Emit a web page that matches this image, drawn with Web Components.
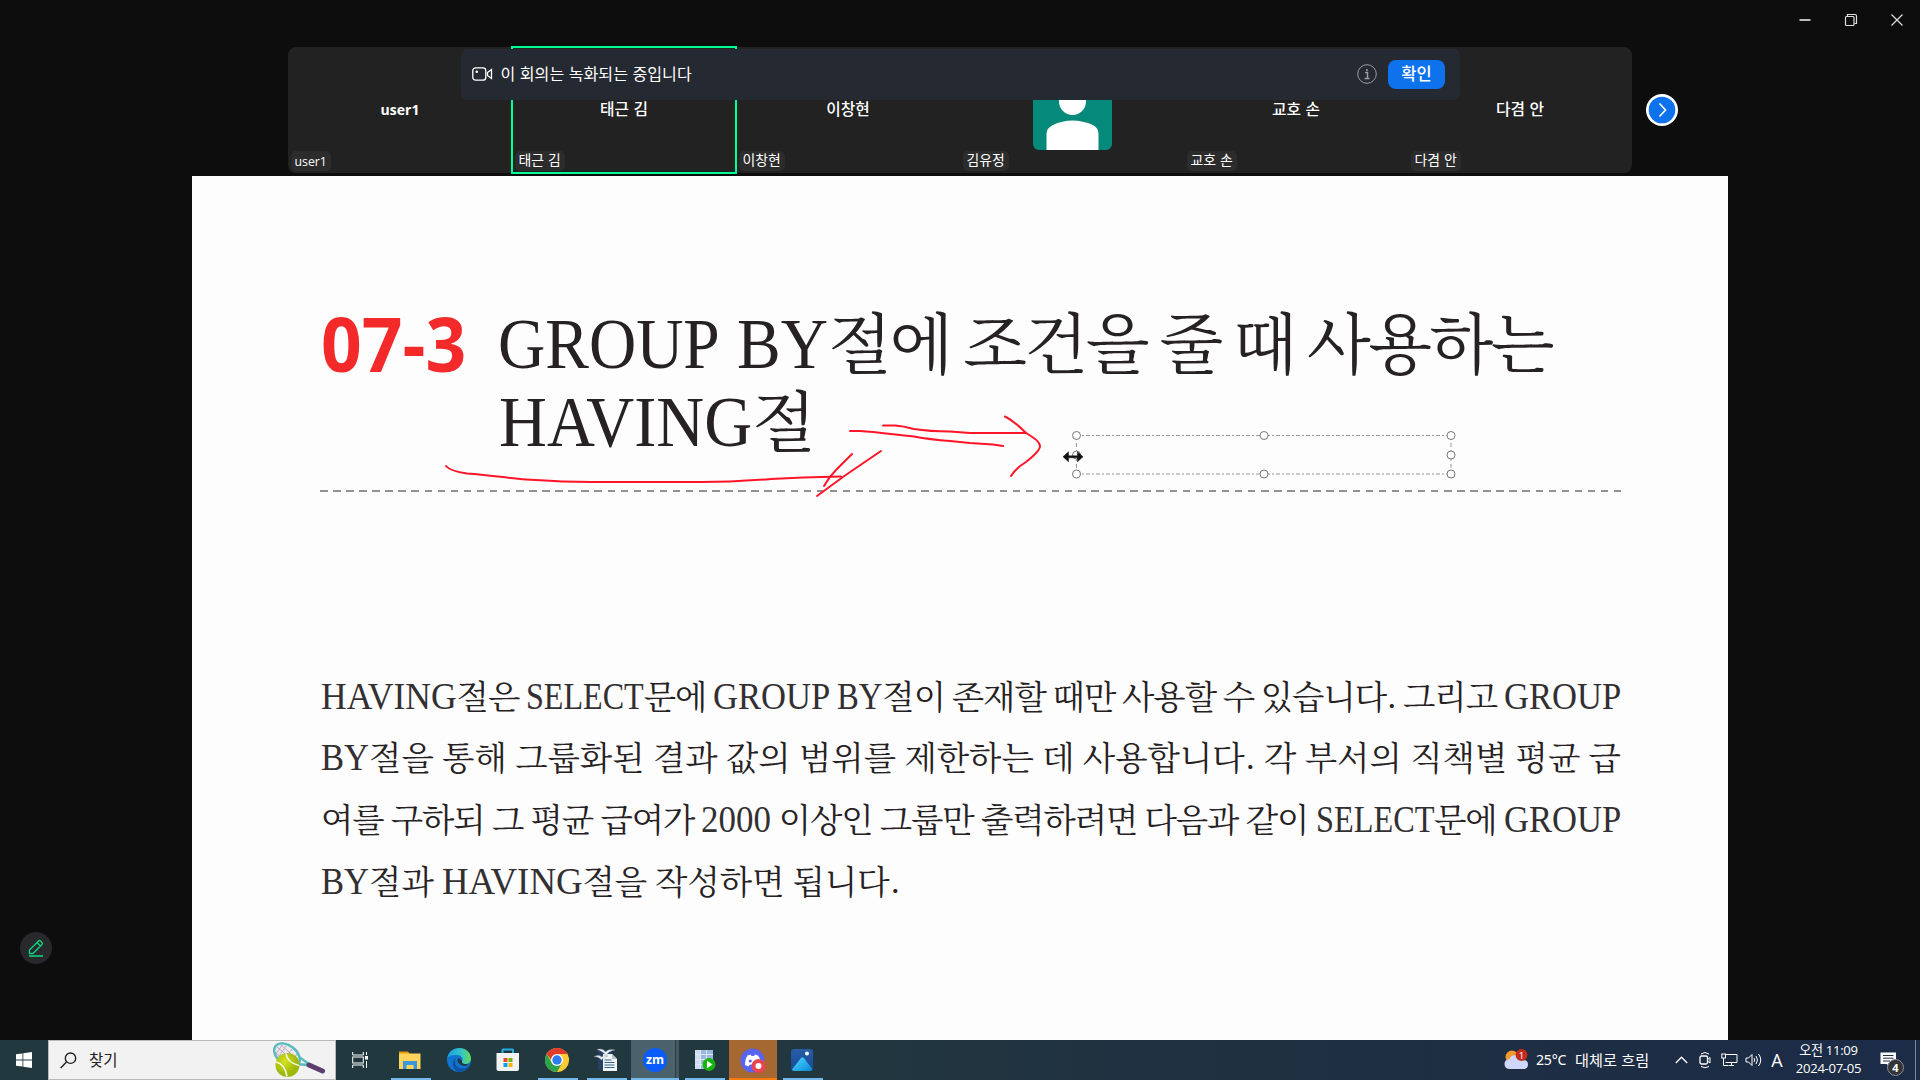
<!DOCTYPE html>
<html lang="ko">
<head>
<meta charset="utf-8">
<title>Meeting</title>
<style>
html,body{margin:0;height:100%;background:#0d0d0d;overflow:hidden}
body{font-family:"Noto Sans","Noto Sans CJK KR",sans-serif}
</style>
</head>
<body>
<meeting-app></meeting-app>
<script>
function define(name, html, init){
  const t=document.createElement('template');
  t.innerHTML=html;
  customElements.define(name, class extends HTMLElement{
    constructor(){super();this.attachShadow({mode:'open'}).appendChild(t.content.cloneNode(true));}
    connectedCallback(){ if(init && !this.done){this.done=true;init.call(this,this.shadowRoot);} }
  });
}

/* Text whose glyphs are condensed horizontally by the "k" attribute. */
define('narrow-text',`<style>
:host{display:inline-block;white-space:pre;vertical-align:baseline}
span{display:inline-block;transform-origin:0 50%}
</style><span></span>`,function(r){
  const s=r.querySelector('span'),k=+this.getAttribute('k');
  s.textContent=this.getAttribute('text');
  const w=s.getBoundingClientRect().width;
  s.style.transform=`scaleX(${k})`;
  this.style.width=w*k+'px';
});

/* One typeset line. "k" lists the condensing factor of each Latin run in order. */
define('book-line',`<style>
:host{display:flex;align-items:baseline;white-space:nowrap;color:#262223;height:var(--lh);line-height:var(--lh)}
:host([justify]){justify-content:space-between}
.w{display:flex;align-items:baseline}
.w.after{margin-left:var(--lgap,0)}
.l{font-family:"Liberation Serif",serif;font-size:var(--latin);color:var(--latin-color,#262223)}
.h{font-family:"Noto Serif CJK KR","Noto Sans CJK KR Light","Noto Sans CJK KR",serif;font-weight:var(--hw,300);font-size:var(--hangul);letter-spacing:var(--track,0)}
</style>`,function(r){
  const ks=this.getAttribute('k').split(' ');
  let i=0,prevLatin=false;
  this.getAttribute('text').split(' ').forEach(word=>{
    const w=document.createElement('div');w.className='w';
    if(prevLatin)w.classList.add('after');
    r.appendChild(w);
    word.match(/[A-Z0-9]+|[^A-Z0-9]+/g).forEach(run=>{
      if(/[A-Z0-9]/.test(run)){
        const e=document.createElement('narrow-text');
        e.className='l';e.setAttribute('k',ks[Math.min(i++,ks.length-1)]);e.setAttribute('text',run);
        w.appendChild(e);
      }else{
        const e=document.createElement('span');e.className='h';e.textContent=run;w.appendChild(e);
      }
    });
    prevLatin=/[A-Z0-9]$/.test(word);
  });
});

define('window-controls',`<style>
:host{display:flex;justify-content:flex-end;height:47px;box-sizing:border-box;padding:0}
svg{width:46px;height:40px}
</style>
<svg viewBox="0 0 46 40"><path d="M17.500 20h11" stroke="#bbb" stroke-width="2"/></svg>
<svg viewBox="0 0 46 40" fill="none" stroke="#ddd" stroke-width="1.2"><rect x="17.5" y="16.5" width="8.5" height="9" rx="1"/><path d="M19.5 16v-1.5h7.500q1.500 0 1.500 1.500v7.500h-2"/></svg>
<svg viewBox="0 0 46 40"><path d="M17.500 14.500l11 11m0-11l-11 11" stroke="#ddd" stroke-width="1.200"/></svg>`);

define('participant-tile',`<style>
:host{display:flex;flex-direction:column;width:224px;height:126px;position:relative;box-sizing:border-box;color:#fff}
:host([active])::after{content:"";position:absolute;inset:-1px;border:2px solid #00ff94}
.name{flex:1;display:flex;justify-content:center;align-items:center;font:500 15.800px/20px "Noto Sans CJK KR",sans-serif;padding-bottom:2px}
.name.en{font:700 14px/20px "Open Sans",sans-serif;padding-bottom:0}
.name.pic{padding-bottom:0}
.tag{position:absolute;left:2.500px;bottom:2px;height:20px;border-radius:5px;background:#2c2c2c;padding:0 4px;font:400 13.900px/16px "Noto Sans CJK KR",sans-serif;white-space:pre}
.tag.en{font:400 12.300px/21px "Open Sans",sans-serif;}
</style><div class="name"><slot></slot></div><div class="tag"></div>`,function(r){
  const n=this.getAttribute('name'),tag=r.querySelector('.tag'),name=r.querySelector('.name');
  tag.textContent=n;
  if(/^[a-z]/.test(n)){tag.classList.add('en');name.classList.add('en');}
  if(this.hasAttribute('avatar'))name.classList.add('pic');
  else name.textContent=n;
});

define('user-avatar',`<style>:host{display:block;width:79px;height:80px;border-radius:6px;overflow:hidden;margin-left:1px}svg{display:block}</style>
<svg width="80" height="80" viewBox="0 0 80 80"><rect width="80" height="80" fill="#04897b"/><circle cx="39.500" cy="31.500" r="13.500" fill="#fff"/><path d="M13.500 80V64Q13.500 58 20 55Q29 50.500 39.500 50.500Q50 50.500 60 55Q65.500 58 65.500 64V80Z" fill="#fff"/></svg>`);

define('recording-notice',`<style>
:host{position:absolute;left:461px;top:49px;width:999px;height:51px;box-sizing:border-box;border-radius:6px;background:#252931;display:flex;align-items:center;padding:0 15px 0 11px;color:#fff}
.t{margin-left:7.500px;flex:1;font:400 16.100px/22px "Noto Sans CJK KR",sans-serif;padding-bottom:4px}
.b{width:57px;height:29px;border-radius:8px;background:#0e72ed;text-align:center;font:500 16.500px/26px "Noto Sans CJK KR",sans-serif;margin-left:11.500px}
svg{display:block;margin-top:-1px}
</style>
<svg width="21" height="16" viewBox="0 0 21 16" fill="none" stroke="#fff" stroke-width="1.300"><rect x=".8" y="1.800" width="13" height="12.400" rx="2.800"/><path d="M15.500 6.500l4-3v9l-4-3z"/><circle cx="4.800" cy="5.800" r="1.300" fill="#fff" stroke="none"/></svg>
<div class="t">이 회의는 녹화되는 중입니다</div>
<svg width="20" height="20" viewBox="0 0 20 20" fill="none" stroke="#9a9da1"><circle cx="10" cy="10" r="9.300"/><path d="M8 8.500h2.500V14M7.500 14.500h5M10 5v2" stroke-width="1.500"/></svg>
<div class="b">확인</div>`);

define('gallery-strip',`<style>
:host{display:flex;align-items:center;height:126px;padding-left:288px}
.s{display:flex;background:#222;border-radius:8px;height:126px;width:1344px}
svg{margin-left:13.500px}
</style><div class="s">
<participant-tile name="user1"></participant-tile>
<participant-tile name="태근 김" active></participant-tile>
<participant-tile name="이창현"></participant-tile>
<participant-tile name="김유정" avatar><user-avatar></user-avatar></participant-tile>
<participant-tile name="교호 손"></participant-tile>
<participant-tile name="다겸 안"></participant-tile>
</div>
<svg width="32" height="32" viewBox="0 0 32 32"><circle cx="16" cy="16" r="16" fill="#fff"/><circle cx="16" cy="16" r="13.300" fill="#0e72ed"/><path d="M13.500 9.500l6 6.500-6 6.500" fill="none" stroke="#fff" stroke-width="1.700"/></svg>`);

define('slide-ink',`<style>:host{position:absolute;left:0;top:0;width:1920px;height:1080px;pointer-events:none}svg{display:block}</style>
<svg width="1920" height="1080" viewBox="0 0 1920 1080" fill="none">
<g stroke="#ff1428" stroke-width="2" stroke-linecap="round" stroke-linejoin="round">
<path d="M446 466Q450 471 467 473.500C490 475 506 478 526 479.500C550 481 570 482 592 482H702C730 482 750 480.500 771 479C800 477.500 820 477 841 476.500"/>
<path d="M852 454L836 470Q829 477 824 486"/>
<path d="M881 451L845 475.500L832 485L817 496"/>
<path d="M850 431H860C880 432 895 435 914 436.500Q930 439.500 950 441L970 443L993 444.500L1003 446"/>
<path d="M883 425.500H895Q903 426 914 429Q930 431.500 950 431.500L970 433H1026"/>
<path d="M1005 416.500Q1014 421 1026 433Q1040 441 1040 446Q1040 451 1026 462Q1016 468 1011 476"/>
</g>
<path d="M1076 435.500H1451M1076 474H1451" stroke="#999" stroke-width="1" stroke-dasharray="4 2 2 2"/>
<path d="M1076.500 436V474M1451 436V474" stroke="#999" stroke-width="1" stroke-dasharray="4 3"/>
<g fill="#fff" stroke="#777" stroke-width="1"><circle cx="1076.500" cy="435.500" r="4"/><circle cx="1264" cy="435.500" r="4"/><circle cx="1451" cy="435.500" r="4"/><circle cx="1076.500" cy="455" r="4"/><circle cx="1451" cy="455" r="4"/><circle cx="1076.500" cy="474" r="4"/><circle cx="1264" cy="474" r="4"/><circle cx="1451" cy="474" r="4"/></g>
<path d="M1063 456.800l5.500-5v4h9v-4l5.500 5-5.500 5v-4h-9v4z" fill="#111" stroke="#111" stroke-width=".5"/>
</svg>`);

define('shared-slide',`<style>
:host{display:block;width:1536px;height:864px;background:#fefdfe;margin:3px 0 0 192px;box-sizing:border-box;padding:123px 107px 0 129px;overflow:hidden}
.head{display:flex;height:190.500px;box-sizing:border-box}
.num{width:177px;height:88px;font:700 75px/88px "Open Sans",sans-serif;color:#f32a29}
.title{--latin:71.500px;--hangul:66px;--lh:77.500px;--track:-2.500px;--lgap:5px;--hw:400;padding-top:2px}
.title book-line{column-gap:12.500px}
.title book-line+book-line{padding-left:1px}
.rule{height:2px;width:1302px;margin-left:-1px;background:repeating-linear-gradient(90deg,#949192 0 7.500px,transparent 7.500px 13.070px)}
.body{--latin:38px;--hangul:33.500px;--lh:61.800px;--latin-color:#333031;--hw:400;padding-top:172px;width:1300px}
.body book-line{column-gap:4px}
.body book-line:nth-child(1){--track:-1px}
.body book-line:nth-child(3){--track:-1.100px}
.body book-line:nth-child(4){column-gap:8px}
</style>
<div class="head"><div class="num"><narrow-text k=".95" text="07-3"></narrow-text></div>
<div class="title"><book-line k=".915" text="GROUP BY절에 조건을 줄 때 사용하는"></book-line><book-line k=".928" text="HAVING절"></book-line></div></div>
<div class="rule"></div>
<div class="body">
<book-line justify k=".935 .845 .91 .86 .91" text="HAVING절은 SELECT문에 GROUP BY절이 존재할 때만 사용할 수 있습니다. 그리고 GROUP"></book-line>
<book-line justify k=".91" text="BY절을 통해 그룹화된 결과 값의 범위를 제한하는 데 사용합니다. 각 부서의 직책별 평균 급"></book-line>
<book-line justify k=".92 .85 .91" text="여를 구하되 그 평균 급여가 2000 이상인 그룹만 출력하려면 다음과 같이 SELECT문에 GROUP"></book-line>
<book-line k=".91 .97" text="BY절과 HAVING절을 작성하면 됩니다."></book-line>
</div>`);

define('annotate-button',`<style>:host{position:absolute;left:20px;top:932px;width:32px;height:32px;border-radius:50%;background:#28292d}svg{display:block}</style>
<svg width="32" height="32" viewBox="0 0 32 32" fill="none" stroke="#0bd880" stroke-width="1.300"><path d="M9.500 21.500v-3.500l9-9q1-.9 2 0l1.500 1.500q.9 1 0 2l-9 9zM17 10.500l3.500 3.500M9 24h14"/></svg>`);

define('task-button',`<style>
:host{display:flex;width:49px;height:40px;align-items:center;position:relative;flex:none}
.b{width:48px;height:40px;display:flex;align-items:center;justify-content:center;box-sizing:border-box}
:host([run])::after{content:"";position:absolute;left:5px;width:40px;height:2px;bottom:0;background:#76b9ed}
:host([on]) .b{background:linear-gradient(90deg,#4b626c 44px,#2b3e46 44px 45px,#43585f 45px)}
:host([on])::after{left:0;width:48px}
:host([alert]) .b{background:#a56832}
:host([alert])::after{left:0;width:48px;background:#ff7a08}
</style><div class="b"><slot></slot></div>`);

define('search-box',`<style>
:host{display:flex;width:288px;height:40px;box-sizing:border-box;border:1px solid #b9b9b9;background:#f2f2f2;align-items:center;padding-left:11px;color:#222}
span{font:400 15.500px/24px "Noto Sans CJK KR",sans-serif;margin-left:12px;flex:1;padding-bottom:2px}
svg{display:block}.r{margin-right:9px}
</style>
<svg width="17" height="17" viewBox="0 0 17 17" fill="none" stroke="#222" stroke-width="1.400"><circle cx="10.500" cy="6.200" r="5.200"/><path d="M6.500 10L.7 16"/></svg>
<span>찾기</span>
<svg class="r" width="54" height="36" viewBox="0 0 54 36"><defs><radialGradient id="b" cx=".4" cy=".35"><stop offset="0" stop-color="#d7e522"/><stop offset="1" stop-color="#9fb70b"/></radialGradient></defs>
<g fill="none"><ellipse cx="15" cy="13" rx="14.500" ry="9.500" transform="rotate(38 15 13)" fill="#ece6ee" stroke="#56bdbb" stroke-width="2.400"/>
<path d="M5 5l19 16M9 3l17 15M3 10l16 14M14 4L6 16M20 7L10 20M25 12l-8 11M10 3L4 12" stroke="#ad9db7" stroke-width=".8"/>
<path d="M27 15l10 7M24 22l12 1" stroke="#56bdbb" stroke-width="2.400"/><path d="M37 23l13.500 6" stroke="#5b3e6c" stroke-width="5" stroke-linecap="round"/></g>
<circle cx="15.500" cy="23" r="12" fill="url(#b)"/><path d="M14 11.500q1 9 13 12M4 20q9 2 11 14.500" fill="none" stroke="#f5f8e4" stroke-width="1.600"/></svg>`);

define('system-tray',`<style>
:host{display:flex;align-items:center;height:40px;color:#fff;font:400 14.500px/20px "Noto Sans","Noto Sans CJK KR",sans-serif;white-space:pre;margin-left:auto}
svg{display:block;flex:none}
.temp{width:39px;margin-left:7px;font-size:14.200px;letter-spacing:-.3px}.sky{width:94px;font:400 15.200px/20px "Noto Sans CJK KR",sans-serif;padding-bottom:2px}
.ic{display:flex;width:24px;justify-content:center;flex:none}
.A{font:400 18px/22px "Open Sans",sans-serif}
.clock{width:79px;text-align:center;font:400 13.100px/17.500px "Open Sans","Noto Sans CJK KR",sans-serif;letter-spacing:-.3px;padding-bottom:1px}
.n{position:relative;margin-left:12px;width:24px;height:40px}
.n b{position:absolute;left:7px;top:19px;width:15px;height:15px;border:1px solid #8b8f96;border-radius:50%;background:#333438;text-align:center;font:700 11px/15px "Open Sans",sans-serif}
.n svg{position:absolute;left:0;top:12px}
.end{width:1px;height:40px;background:#7f889a;margin:0 4px 0 11px}
</style>
<svg width="25" height="22" viewBox="0 0 25 22"><circle cx="8" cy="8" r="6.500" fill="#f39a2e"/><path d="M6 20q-5.500 0-5.500-5 0-4.200 4.500-4.700Q7 6 12 6q5.500 0 7 5 5 0 5 4.500T19.500 20z" fill="#cfd8fb"/><circle cx="17.500" cy="6" r="6" fill="#c42b1c"/><text x="17.500" y="9.500" fill="#fff" font-size="9.500" font-family="Open Sans" text-anchor="middle">1</text></svg>
<div class="temp">25°C</div><div class="sky">대체로 흐림</div>
<div class="ic"><svg width="13" height="8" viewBox="0 0 13 8"><path d="M.8 7l5.700-5.800L12.200 7" fill="none" stroke="#fff" stroke-width="1.300"/></svg></div>
<div class="ic"><svg width="12" height="18" viewBox="0 0 12 18" fill="none" stroke="#fff"><rect x="1" y="5" width="7.500" height="8" rx="1.500" stroke-width="1.300"/><path d="M8.500 8.500l2.500-2v5.500l-2.500-2M2 3Q6 0 10 3M2 15.500q4 2.500 8 0"/></svg></div>
<div class="ic"><svg width="17" height="16" viewBox="0 0 17 16" fill="none" stroke="#fff"><path d="M5 2.500h11v8H4.500M8 13.500h5M10.500 10.500v3M2.500 6v7.500h5"/><rect x=".8" y="2" width="3.700" height="4"/></svg></div>
<div class="ic"><svg width="17" height="16" viewBox="0 0 17 16" fill="none" stroke="#fff"><path d="M1 6h2.500l3.500-3.500v11L3.500 10H1zM9 6q1.500 2 0 4M11 4q3 4 0 8M13.500 2q4.500 6 0 12"/></svg></div>
<div class="ic A">A</div>
<div class="clock"><div>오전 11:09</div><div>2024-07-05</div></div>
<div class="n"><svg width="17" height="18" viewBox="0 0 17 18"><path d="M.5.500h15.500v11.500h-5v4l-4.500-4H.5z" fill="#fff"/><path d="M3 3.500h10.500M3 6.200h10.500M3 9h7" stroke="#203047"/></svg><b>4</b></div>
<div class="end"></div>`);

define('task-bar',`<style>
:host{display:flex;height:40px;width:1920px;background:linear-gradient(90deg,#22383f 0,#22383f 38%,#1f3041 65%,#1c2b47 100%)}
.start{width:48px;display:flex;align-items:center;justify-content:center}
.first{margin-right:1px}
svg{display:block}
</style>
<div class="start"><svg width="16" height="16" viewBox="0 0 16 16" fill="#fff"><path d="M0 2.300L6.500 1.400v6.200H0zM7.300 1.300L16 0v7.600H7.300zM0 8.400h6.500v6.200L0 13.700zM7.300 8.400H16V16l-8.700-1.300z"/></svg></div>
<search-box></search-box>
<task-button class="first"><svg width="17" height="16" viewBox="0 0 17 16" fill="none" stroke="#fff"><path d="M.7 0v3h10.600V0M.7 16v-3h10.600v3M14.500 0v3M14.500 9v7"/><rect x=".7" y="5" width="10.600" height="6"/><rect x="13.500" y="4.500" width="2" height="2.500" fill="#fff"/></svg></task-button>
<task-button run><svg width="22" height="20" viewBox="0 0 22 20"><path d="M0 1.500h9l2 2.500H0z" fill="#e59a0a"/><path d="M0 3.500h21.500V19H0z" fill="#ffd35c"/><path d="M4 19v-8h14v8h-3.500v-4h-7v4z" fill="#3a97dc"/></svg></task-button>
<task-button><svg width="24" height="24" viewBox="0 0 24 24"><defs><linearGradient id="e1"><stop offset="0" stop-color="#1b9de2"/><stop offset=".6" stop-color="#35c5c6"/><stop offset="1" stop-color="#6ada55"/></linearGradient></defs><circle cx="12" cy="12" r="12" fill="#1173d0"/><path d="M.3 10C1.500 3.500 7 0 12 0c7 0 12 5 12 10.500 0 4-3 5.500-6 5.500-2.500 0-4-1-3-2.500 2-4-1.500-7-6-6.500C5 7 2 8 .3 10z" fill="url(#e1)"/><path d="M9.500 9.500c-4 5 0 11 6 11 3 0 5-1 7-3.500-2 5-7 7-11 7-6-2-8-11-2-14.500z" fill="#0f529f"/><path d="M11 10q-2 6 6 8 2 0 5.500-2-4 1-7.500-1 1-3-4-5z" fill="#22383f"/></svg></task-button>
<task-button><svg width="24" height="24" viewBox="0 0 24 24"><path d="M6.500 7V2Q6.500 1.500 7 1.500h9.500q.5 0 .5.500v5" fill="none" stroke="#27aee8" stroke-width="2"/><path d="M.5 5h22.500v16q0 2-2 2H2.500q-2 0-2-2z" fill="#f2f2f2"/><path d="M7.500 10H11.500v4H7.500z" fill="#e84d24"/><path d="M12.500 10h4v4h-4z" fill="#78b60b"/><path d="M7.500 15H11.500v4H7.500z" fill="#10a0e4"/><path d="M12.500 15h4v4h-4z" fill="#f7b20a"/></svg></task-button>
<task-button run><svg width="24" height="24" viewBox="0 0 24 24"><circle cx="12" cy="12" r="12" fill="#fc3"/><path d="M1.600 6A12 12 0 0 1 22.400 6H12L8 14z" fill="#e23b2e"/><path d="M1.600 6A12 12 0 0 0 12 24l5.200-9L7 15z" fill="#2ba24c"/><circle cx="12" cy="12" r="6" fill="#fff"/><circle cx="12" cy="12" r="4.700" fill="#2e7df0"/></svg></task-button>
<task-button run><svg width="24" height="24" viewBox="0 0 24 24"><path d="M4 2h14v20H4z" fill="#263f62"/><path d="M9 6h9l5 5v12H9z" fill="#f1f4f6"/><path d="M18 6l5 5h-5z" fill="#b4bec5"/><path d="M10.500 12h7M10.500 14.500h10M10.500 17h10M10.500 19.500h10" stroke="#356287" stroke-width="1.200"/><path d="M3 1.500Q9 0 11.500 4Q15 .5 21 2Q15 2.500 12 7.500Q9 3 3 1.500zM0 8.500Q5 6.500 7.500 9Q10 7 14 8Q10 8.500 7.500 12Q5 8.500 0 8.500z" fill="#f0f4f6" stroke="#8596a3" stroke-width=".4"/></svg></task-button>
<task-button on run><svg width="24" height="24" viewBox="0 0 24 24"><circle cx="12" cy="12" r="12" fill="#0b5cff"/><text x="12" y="16" text-anchor="middle" font-family="Open Sans" font-size="12.500" font-weight="700" fill="#fff" textLength="18" lengthAdjust="spacingAndGlyphs">zm</text></svg></task-button>
<task-button run><svg width="24" height="24" viewBox="0 0 24 24"><path d="M3 2h18v19H3z" fill="#9bb8dd"/><path d="M3 2h5v19H3z" fill="#cfdeef"/><path d="M3 6.500h18M3 11.500h18M3 16.500h18M8.500 2v19M14.500 2v19" stroke="#e3ecf7" stroke-width=".9"/><circle cx="17" cy="16.500" r="6.500" fill="#16b40b"/><path d="M15 12.800l5.500 3.700-5.500 3.700z" fill="#fff"/></svg></task-button>
<task-button alert run><svg width="26" height="25" viewBox="0 0 26 25"><circle cx="12.500" cy="12.500" r="12" fill="#5865f2"/><path d="M5 17Q5 11 7.500 7.500L10.500 6.500l1 1.500h2.500l1-1.500 3 1Q21 11 20.500 17l-3 1.500-1.500-2h-6l-1.500 2z" fill="#fff"/><circle cx="10.300" cy="13" r="1.600" fill="#5865f2"/><circle cx="18.500" cy="18" r="7" fill="#e84550"/><circle cx="18.500" cy="18" r="3" fill="#fff"/></svg></task-button>
<task-button run><svg width="22" height="22" viewBox="0 0 22 22"><defs><linearGradient id="p" x2="0" y2="1"><stop offset="0" stop-color="#285da9"/><stop offset="1" stop-color="#164a99"/></linearGradient><linearGradient id="q" x2="1" y2="1"><stop offset="0" stop-color="#50dcff"/><stop offset="1" stop-color="#0a86d8"/></linearGradient></defs><rect width="22" height="22" rx="3" fill="url(#p)"/><path d="M1 20.500L10 9q1.500-1.600 3 0l8.500 11.500q-1 1.500-2.500 1.500H3q-1.500 0-2-1.500z" fill="url(#q)"/><circle cx="16" cy="4.500" r="2" fill="#fff"/></svg></task-button>
<system-tray></system-tray>`);

define('meeting-app',`<style>
:host{display:flex;flex-direction:column;width:1920px;height:1080px;position:relative;background:#0d0d0d;overflow:hidden}
window-controls,gallery-strip,shared-slide,task-bar{flex:none}
</style>
<window-controls></window-controls>
<gallery-strip></gallery-strip>
<shared-slide></shared-slide>
<task-bar></task-bar>
<recording-notice></recording-notice>
<slide-ink></slide-ink>
<annotate-button></annotate-button>`);
</script>
</body>
</html>
